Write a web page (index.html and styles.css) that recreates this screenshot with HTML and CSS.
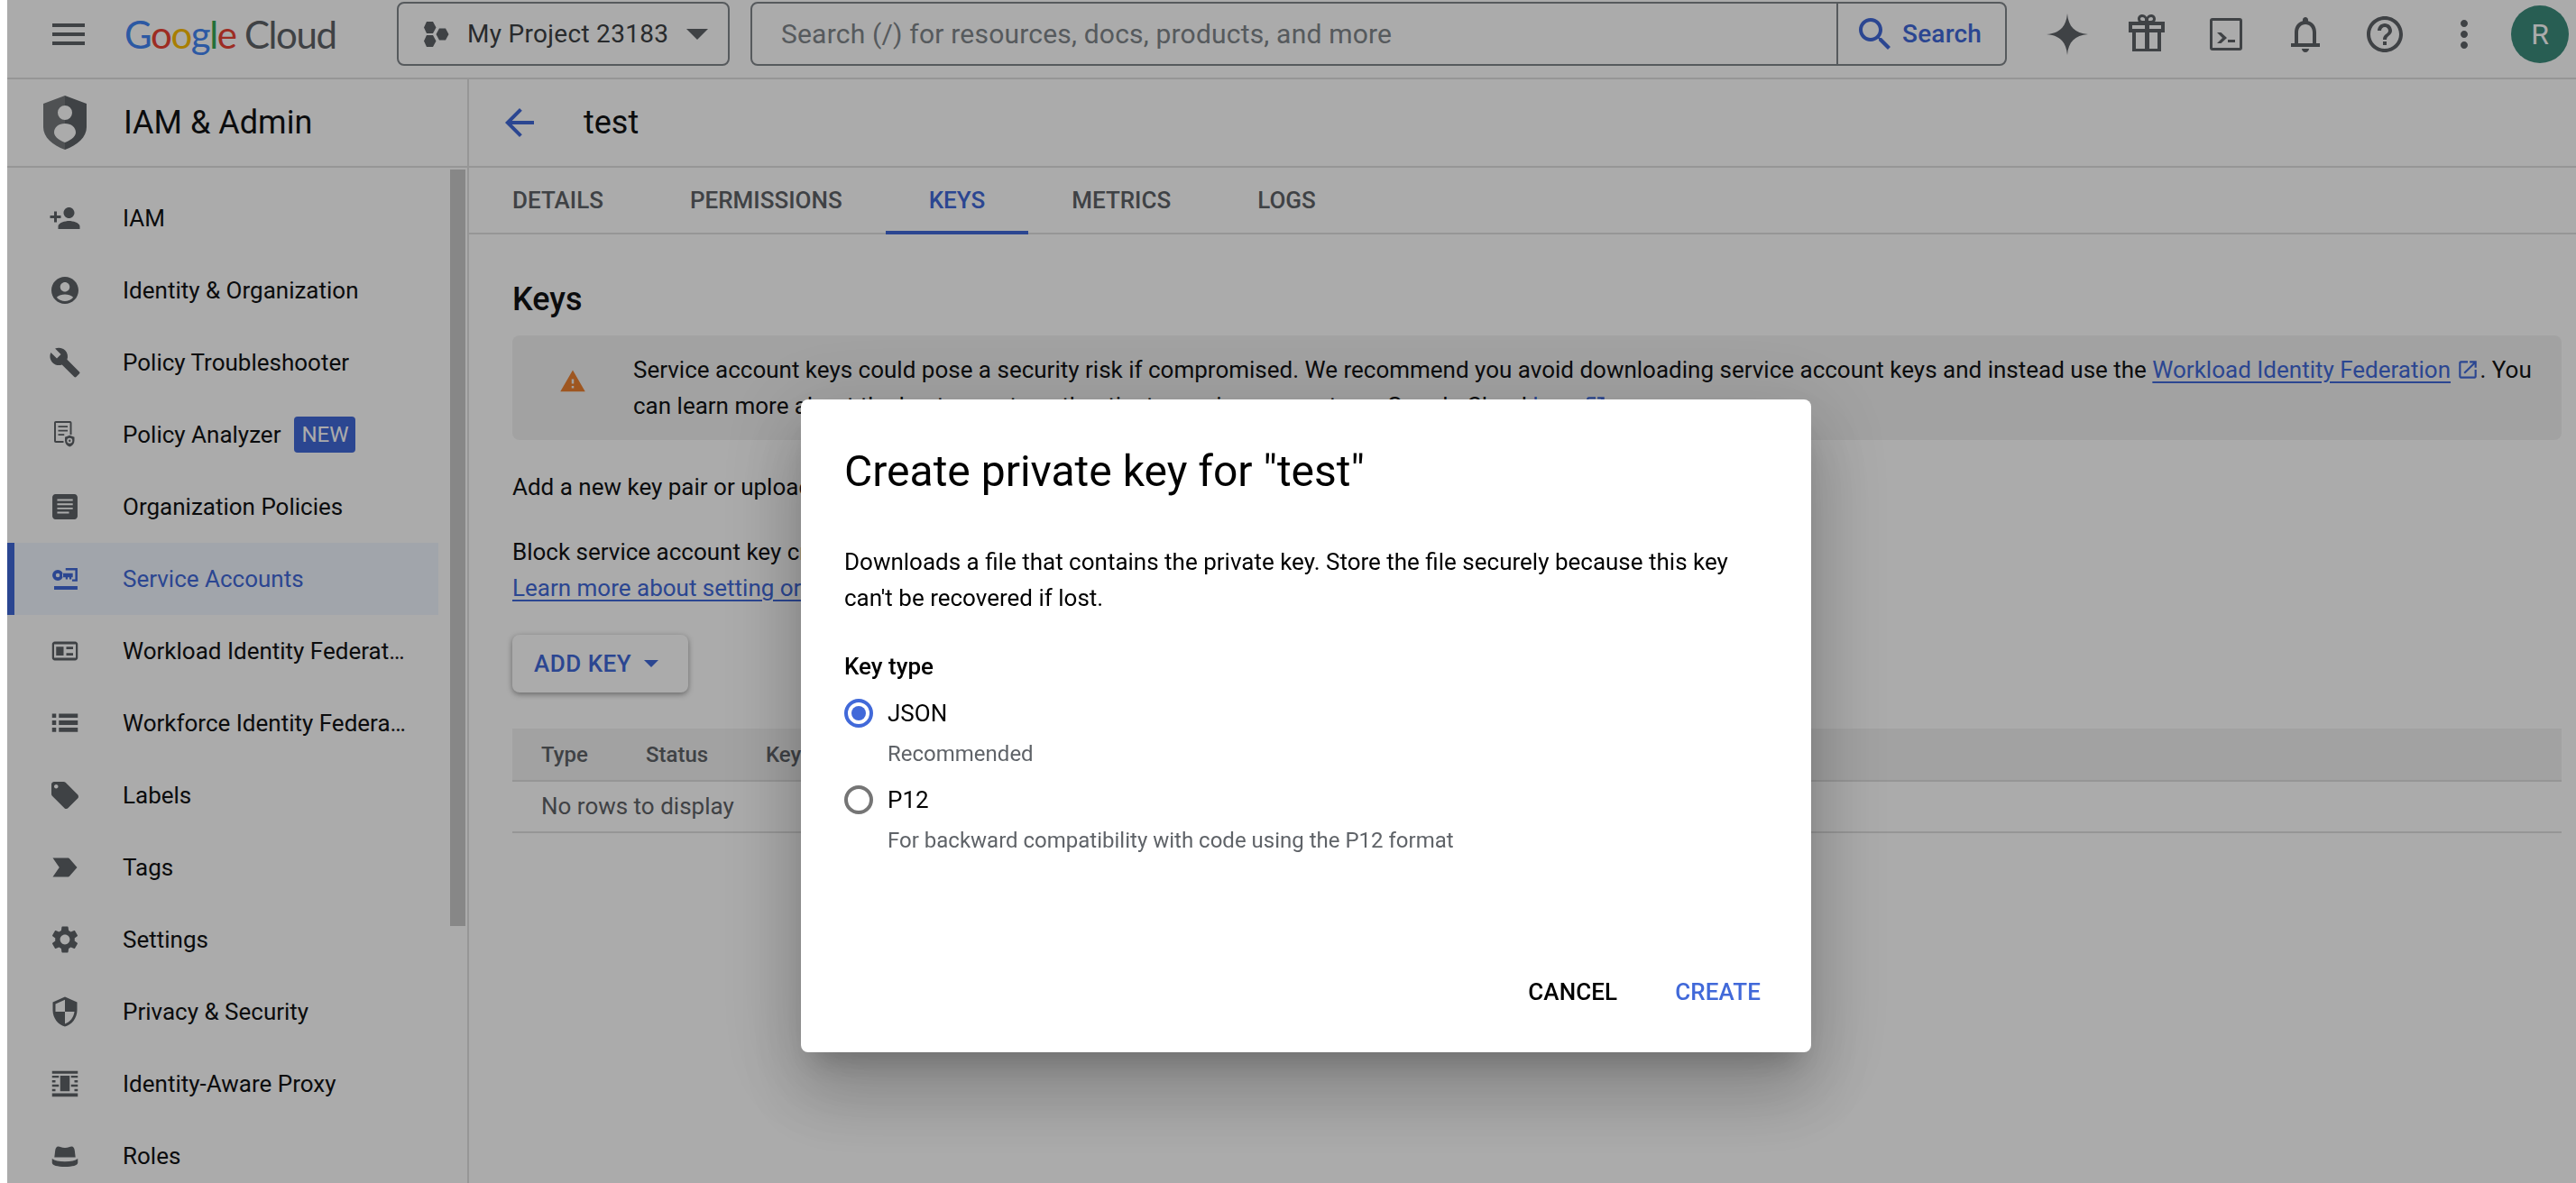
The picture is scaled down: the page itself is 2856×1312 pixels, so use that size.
FILE: index.html
```html
<!DOCTYPE html>
<html lang="en">
<head>
    <meta charset="UTF-8">
    <title>Service account keys - IAM &amp; Admin</title>
    <link rel="stylesheet" href="styles.css">
</head>
<body>
    <div class="app">
        <header class="topbar">
            <svg class="icon-lg menu-btn" viewBox="0 0 24 24"><path d="M3 18h18v-2H3v2zm0-5h18v-2H3v2zm0-7v2h18V6H3z"/></svg>
            <div class="logo">
                <span class="logo-google"><span class="g-blue">G</span><span class="g-red">o</span><span class="g-yellow">o</span><span class="g-blue">g</span><span class="g-green">l</span><span class="g-red">e</span></span>
                <span class="logo-cloud">Cloud</span>
            </div>
            <div class="project-picker">
                <svg class="project-icon" viewBox="0 0 28 30"><path d="M3 1h7l3.500 6.500L10 14H3L0 7.500zM17 8.500h7l3.500 6.500-3.500 6.500h-7L13.500 15zM3 16h7l3.500 6.500L10 29H3L0 22.500z"/></svg>
                <span>My Project 23183</span>
                <svg class="caret" viewBox="0 0 24 14"><path d="M0 1h24L12 13z"/></svg>
            </div>
            <div class="search-box">
                <div class="search-input">Search (/) for resources, docs, products, and more</div>
                <div class="search-btn">
                    <svg class="icon-lg" viewBox="0 0 24 24"><path d="M15.500 14h-.79l-.28-.27C15.410 12.590 16 11.110 16 9.500 16 5.910 13.090 3 9.500 3S3 5.910 3 9.500 5.910 16 9.500 16c1.610 0 3.090-.59 4.230-1.570l.27.28v.79l5 4.990L20.490 19l-4.990-5zm-6 0C7.010 14 5 11.990 5 9.500S7.010 5 9.500 5 14 7.010 14 9.500 11.990 14 9.500 14z"/></svg>
                    <span>Search</span>
                </div>
            </div>
            <div class="top-icons">
                <svg class="icon-lg" viewBox="0 0 24 24"><path d="M12 .5c.6 7.300 4.200 10.900 11.500 11.500-7.300.6-10.900 4.200-11.500 11.500-.6-7.300-4.200-10.900-11.500-11.500C7.800 11.400 11.400 7.800 12 .5z"/></svg>
                <svg class="icon-lg" viewBox="0 0 48 48"><path fill-rule="evenodd" d="M4 10h40v12h-4v21H8V22H4zM8 14v4h14v-4zm19 0v4h13v-4zM12 22v18h10V22zm15 0v18h9V22z"/><path fill-rule="evenodd" d="M19 2c2 0 4 1 5 3 1-2 3-3 5-3 3 0 5 2.200 5 5 0 1.100-.3 2.100-.9 3H14.900c-.6-.9-.9-1.900-.9-3 0-2.800 2-5 5-5zm0 3c-1.100 0-2 .9-2 2s.9 2 2 2h3V7c0-1.100-1.900-2-3-2zm10 0c-1.100 0-3 .9-3 2v2h3c1.100 0 2-.9 2-2s-.9-2-2-2z"/></svg>
                <svg class="icon-lg" viewBox="0 0 48 48"><path fill-rule="evenodd" d="M9 6h30a3 3 0 0 1 3 3v30a3 3 0 0 1-3 3H9a3 3 0 0 1-3-3V9a3 3 0 0 1 3-3zm0 3v30h30V9zm5 13h4.500l6.500 6-6.500 6H14l6-6zm12 8h8v3h-8z"/></svg>
                <svg class="icon-lg" viewBox="0 0 24 24"><path d="M12 22c1.100 0 2-.9 2-2h-4c0 1.100.9 2 2 2zm6-6v-5c0-3.070-1.630-5.640-4.500-6.320V4c0-.83-.67-1.500-1.500-1.500s-1.500.67-1.500 1.500v.68C7.640 5.360 6 7.920 6 11v6H4v2h16v-2h-2zm-2 1H8v-6c0-2.480 1.510-4.500 4-4.500s4 2.020 4 4.500v6z"/></svg>
                <svg class="icon-lg" viewBox="0 0 24 24"><path d="M11 18h2v-2h-2v2zm1-16C6.480 2 2 6.480 2 12s4.480 10 10 10 10-4.480 10-10S17.520 2 12 2zm0 18c-4.410 0-8-3.590-8-8s3.590-8 8-8 8 3.590 8 8-3.590 8-8 8zm0-14c-2.210 0-4 1.790-4 4h2c0-1.100.9-2 2-2s2 .9 2 2c0 2-3 1.750-3 5h2c0-2.250 3-2.500 3-5 0-2.210-1.790-4-4-4z"/></svg>
                <svg class="icon-lg" viewBox="0 0 24 24"><path d="M12 8c1.100 0 2-.9 2-2s-.9-2-2-2-2 .9-2 2 .9 2 2 2zm0 2c-1.100 0-2 .9-2 2s.9 2 2 2 2-.9 2-2-.9-2-2-2zm0 6c-1.100 0-2 .9-2 2s.9 2 2 2 2-.9 2-2-.9-2-2-2z"/></svg>
            </div>
            <div class="avatar">R</div>
        </header>

        <div class="layout">
            <aside class="sidebar">
                <div class="sidebar-head">
                    <svg class="shield" viewBox="0 0 48 60">
                        <defs>
                            <linearGradient id="shieldFill">
                                <stop offset="50%" stop-color="#767a7d"/>
                                <stop offset="50%" stop-color="#5f6368"/>
                            </linearGradient>
                        </defs>
                        <path fill="url(#shieldFill)" fill-rule="evenodd" d="M24 0l24 9v26c0 11-10 20-24 25C10 55 0 46 0 35V9zm0 11a8 8 0 1 0 0 16 8 8 0 0 0 0-16zm0 20c-7 0-12 4-12 10 0 5 7 9 12 11 5-2 12-6 12-11 0-6-5-10-12-10z"/>
                    </svg>
                    <span>IAM &amp; Admin</span>
                </div>
                <div class="nav-wrap">
                    <nav class="nav">
                        <a class="nav-item">
                            <svg viewBox="0 0 24 24"><path d="M15 12c2.210 0 4-1.790 4-4s-1.790-4-4-4-4 1.790-4 4 1.790 4 4 4zm-9-2V7H4v3H1v2h3v3h2v-3h3v-2H6zm9 4c-2.670 0-8 1.340-8 4v2h16v-2c0-2.660-5.330-4-8-4z"/></svg>
                            <span class="nav-label">IAM</span>
                        </a>
                        <a class="nav-item">
                            <svg viewBox="0 0 24 24"><path d="M12 2C6.480 2 2 6.480 2 12s4.480 10 10 10 10-4.480 10-10S17.520 2 12 2zm0 4c1.930 0 3.500 1.570 3.500 3.500S13.930 13 12 13s-3.500-1.570-3.500-3.500S10.070 6 12 6zm0 14c-2.030 0-4.430-.82-6.140-2.880C7.550 15.800 9.680 15 12 15s4.450.8 6.140 2.120C16.430 19.180 14.030 20 12 20z"/></svg>
                            <span class="nav-label">Identity &amp; Organization</span>
                        </a>
                        <a class="nav-item">
                            <svg viewBox="0 0 24 24"><path d="M22.700 19l-9.100-9.100c.9-2.300.4-5-1.500-6.900-2-2-5-2.400-7.400-1.300L9 6 6 9 1.600 4.700C.4 7.100.9 10.100 2.900 12.100c1.900 1.900 4.600 2.400 6.900 1.500l9.100 9.100c.4.4 1 .4 1.400 0l2.300-2.300c.5-.4.5-1.100.1-1.400z"/></svg>
                            <span class="nav-label">Policy Troubleshooter</span>
                        </a>
                        <a class="nav-item">
                            <svg viewBox="0 0 24 24"><path fill-rule="evenodd" d="M5.300 2h10.400c.8 0 1.300.5 1.300 1.300V12h-1.300V3.300H5.300v13.400H11V18H5.300c-.8 0-1.300-.5-1.300-1.300V3.300C4 2.500 4.500 2 5.300 2zM7 5.500h7v1.200H7zm0 3h7v1.200H7zm0 3h4.500v1.200H7zM15.500 12.500l3.500 1.300v2.700c0 2.200-1.500 3.700-3.500 4.500-2-.8-3.500-2.300-3.500-4.500v-2.700zm0 2a2 2 0 1 0 0 4 2 2 0 0 0 0-4zm0 1.200a.8.8 0 1 1 0 1.600.8.8 0 0 1 0-1.600z"/></svg>
                            <span class="nav-label">Policy Analyzer</span>
                            <span class="badge">NEW</span>
                        </a>
                        <a class="nav-item">
                            <svg viewBox="0 0 24 24"><path fill-rule="evenodd" d="M5 2.700h14c1.200 0 2.300 1.100 2.300 2.300v14c0 1.200-1.100 2.300-2.300 2.300H5c-1.200 0-2.300-1.100-2.300-2.300V5c0-1.200 1.100-2.300 2.300-2.300zM6.300 6.400v1.300h11.500V6.400zm0 3.100v1.300h11.500V9.500zm0 3.100v1.300h11.500v-1.300zm0 3.100v1.300H15v-1.300z"/></svg>
                            <span class="nav-label">Organization Policies</span>
                        </a>
                        <a class="nav-item active">
                            <svg viewBox="0 0 24 24"><path fill-rule="evenodd" d="M6.700 5.300a4 4 0 1 1 0 8 4 4 0 0 1 0-8zm0 2.500a1.500 1.500 0 1 0 0 3 1.500 1.500 0 0 0 0-3zM10 7.800h7.800v3h-1v1.500h-1.500v-1.500H14v1.500h-1.500v-1.500H10zM12.500 4h8.800v9.800h-4v-1.500h2.300V5.700h-7.100zM4 17.300h17.300V20H4z"/></svg>
                            <span class="nav-label">Service Accounts</span>
                        </a>
                        <a class="nav-item">
                            <svg viewBox="0 0 24 24"><path fill-rule="evenodd" d="M4.500 5h15c1.100 0 2 .9 2 2v10c0 1.100-.9 2-2 2h-15c-1.100 0-2-.9-2-2V7c0-1.100.9-2 2-2zm-.5 2v10h16V7zm1.500 1.800h5.500v6.500H5.500zm7.500 0h5v1.800h-5zm0 4.700h5v1.800h-5z"/></svg>
                            <span class="nav-label">Workload Identity Federat…</span>
                        </a>
                        <a class="nav-item">
                            <svg viewBox="0 0 24 24"><path d="M2.500 5h3v3h-3zm5 0h14v3h-14zm-5 5h3v3.300h-3zm5 0h14v3.300h-14zm-5 5.300h3v3.200h-3zm5 0h14v3.200h-14z"/></svg>
                            <span class="nav-label">Workforce Identity Federa…</span>
                        </a>
                        <a class="nav-item">
                            <svg viewBox="0 0 24 24"><path d="M21.410 11.580l-9-9C12.050 2.220 11.550 2 11 2H4c-1.100 0-2 .9-2 2v7c0 .55.22 1.050.59 1.420l9 9c.36.36.86.58 1.410.58.55 0 1.050-.22 1.410-.59l7-7c.37-.36.59-.86.59-1.410 0-.55-.23-1.060-.59-1.420zM5.500 7C4.670 7 4 6.330 4 5.500S4.670 4 5.500 4 7 4.670 7 5.500 6.330 7 5.500 7z"/></svg>
                            <span class="nav-label">Labels</span>
                        </a>
                        <a class="nav-item">
                            <svg viewBox="0 0 24 24"><path d="M3 19l11 .01c.67 0 1.270-.33 1.630-.84L21 12l-5.370-6.160c-.36-.51-.96-.84-1.630-.84L3 5.010 7.840 12 3 19z"/></svg>
                            <span class="nav-label">Tags</span>
                        </a>
                        <a class="nav-item">
                            <svg viewBox="0 0 24 24"><path d="M19.140 12.940c.04-.3.06-.61.06-.94 0-.32-.02-.64-.07-.94l2.030-1.580c.18-.14.23-.41.12-.61l-1.920-3.320c-.12-.22-.37-.29-.59-.22l-2.390.96c-.5-.38-1.030-.7-1.620-.94l-.36-2.540c-.04-.24-.24-.41-.48-.41h-3.840c-.24 0-.43.17-.47.41l-.36 2.540c-.59.24-1.130.57-1.620.94l-2.390-.96c-.22-.08-.47 0-.59.22L2.740 8.870c-.12.21-.08.47.12.61l2.030 1.580c-.05.3-.09.63-.09.94s.02.64.07.94l-2.030 1.580c-.18.14-.23.41-.12.61l1.920 3.320c.12.22.37.29.59.22l2.390-.96c.5.38 1.030.7 1.620.94l.36 2.540c.05.24.24.41.48.41h3.840c.24 0 .44-.17.47-.41l.36-2.540c.59-.24 1.130-.56 1.620-.94l2.390.96c.22.08.47 0 .59-.22l1.920-3.320c.12-.22.07-.47-.12-.61l-2.010-1.580zM12 15.600c-1.980 0-3.600-1.620-3.600-3.600s1.620-3.600 3.600-3.600 3.600 1.620 3.600 3.600-1.620 3.600-3.600 3.600z"/></svg>
                            <span class="nav-label">Settings</span>
                        </a>
                        <a class="nav-item">
                            <svg viewBox="0 0 24 24"><path d="M12 1L3 5v6c0 5.550 3.840 10.740 9 12 5.160-1.260 9-6.450 9-12V5l-9-4zm0 10.990h7c-.53 4.120-3.280 7.790-7 8.940V12H5V6.300l7-3.110v8.800z"/></svg>
                            <span class="nav-label">Privacy &amp; Security</span>
                        </a>
                        <a class="nav-item">
                            <svg viewBox="0 0 24 24"><path d="M2.500 2.500h19v2h-19zm0 3.500h5v1.500h-5zm14 0h5v1.500h-5zm-8 0h7v11.500h-7zm-6 3.300h2.500v1.700H2.500zm16.500 0h2.500v1.700H19zM2.500 12.500h5v1.700h-5zm14 0h5v1.700h-5zm-14 3.300h2.500v1.700H2.500zm16.500 0h2.500v1.700H19zM2.500 19h19v2.500h-19z"/></svg>
                            <span class="nav-label">Identity-Aware Proxy</span>
                        </a>
                        <a class="nav-item">
                            <svg viewBox="0 0 24 24"><path d="M7 5c1.500 0 2.500 1 5 1s3.500-1 5-1c1.200 0 1.900 1 2.200 3l.6 5H4.200l.6-5C5.100 6 5.800 5 7 5zM2.500 14c2 1.500 5 2.200 9.500 2.200s7.500-.7 9.500-2.200v3c0 2-4 3-9.500 3s-9.500-1-9.500-3z"/></svg>
                            <span class="nav-label">Roles</span>
                        </a>
                    </nav>
                    <div class="scroll-thumb"></div>
                </div>
            </aside>

            <main class="main">
                <div class="page-head">
                    <svg class="icon-lg back-btn" viewBox="0 0 24 24"><path d="M20 11H7.830l5.590-5.590L12 4l-8 8 8 8 1.410-1.410L7.830 13H20v-2z"/></svg>
                    <span>test</span>
                </div>
                <div class="tabs">
                    <div class="tab">Details</div>
                    <div class="tab">Permissions</div>
                    <div class="tab tab-active">Keys</div>
                    <div class="tab">Metrics</div>
                    <div class="tab">Logs</div>
                </div>
                <section class="content">
                    <h2>Keys</h2>
                    <div class="notice">
                        <svg class="notice-icon" viewBox="0 0 24 24"><path d="M1 21h22L12 2 1 21zm12-3h-2v-2h2v2zm0-4h-2v-4h2v4z"/></svg>
                        <p>Service account keys could pose a security risk if compromised. We recommend you avoid downloading service account keys and instead use the <a class="link">Workload Identity Federation</a> <svg class="ext-icon" viewBox="0 0 24 24"><path d="M19 19H5V5h7V3H5c-1.110 0-2 .9-2 2v14c0 1.100.89 2 2 2h14c1.100 0 2-.9 2-2v-7h-2v7zM14 3v2h3.590l-9.830 9.830 1.410 1.410L19 6.410V10h2V3h-7z"/></svg>. You can learn more about the best ways to authenticate service accounts on Google Cloud <a class="link">here</a> <svg class="ext-icon" viewBox="0 0 24 24"><path d="M19 19H5V5h7V3H5c-1.110 0-2 .9-2 2v14c0 1.100.89 2 2 2h14c1.100 0 2-.9 2-2v-7h-2v7zM14 3v2h3.590l-9.830 9.830 1.410 1.410L19 6.410V10h2V3h-7z"/></svg>.</p>
                    </div>
                    <p class="para">Add a new key pair or upload a public key certificate from an existing key pair.</p>
                    <p class="para">Block service account key creation using organization policies.<br><a class="link">Learn more about setting organization policies for service accounts</a></p>
                    <div class="add-key">
                        <span>Add key</span>
                        <svg viewBox="0 0 16 8"><path d="M0 0h16L8 8z"/></svg>
                    </div>
                    <div class="table-head">
                        <span class="col-type">Type</span>
                        <span class="col-status">Status</span>
                        <span>Key</span>
                    </div>
                    <div class="table-row">No rows to display</div>
                </section>
            </main>
        </div>
    </div>

    <div class="scrim"></div>

    <div class="dialog">
        <h1>Create private key for "test"</h1>
        <p class="dialog-desc">Downloads a file that contains the private key. Store the file securely because this key can't be recovered if lost.</p>
        <div class="field-label">Key type</div>
        <div class="radio-row">
            <span class="radio radio-on"></span>
            <span>JSON</span>
        </div>
        <div class="radio-hint">Recommended</div>
        <div class="radio-row radio-row-next">
            <span class="radio"></span>
            <span>P12</span>
        </div>
        <div class="radio-hint">For backward compatibility with code using the P12 format</div>
        <div class="dialog-actions">
            <button class="btn">Cancel</button>
            <button class="btn btn-primary">Create</button>
        </div>
    </div>
</body>
</html>
```

FILE: styles.css
```css
:root {
    --blue: #4169d9;
    --icon: #5f6368;
    --text: #111214;
    --line: #e0e0e0;
}

* {
    box-sizing: border-box;
}

html, body {
    height: 100%;
}

body {
    margin: 0;
    padding-left: 8px;
    height: 1312px;
    overflow: hidden;
    background: white;
    color: var(--text);
    font-family: Roboto, "Liberation Sans", sans-serif;
    font-size: 26px;
    line-height: 40px;
}

svg {
    fill: currentColor;
    flex-shrink: 0;
}

p, h1, h2 {
    margin: 0;
}

.icon-lg {
    width: 48px;
    height: 48px;
    color: var(--icon);
}

/* top bar */
.app {
    height: 1312px;
    display: flex;
    flex-direction: column;
}

.topbar {
    height: 88px;
    flex-shrink: 0;
    display: flex;
    align-items: center;
    padding-bottom: 11px;
    border-bottom: 2px solid var(--line);
}

.menu-btn {
    margin-left: 44px;
}

.logo {
    width: 302px;
    margin-left: 38px;
    font-family: Lato, Roboto, sans-serif;
    font-size: 42px;
    letter-spacing: -1.4px;
    white-space: nowrap;
}

.logo-cloud {
    color: var(--icon);
}

.g-blue { color: #4285f4; }
.g-red { color: #ea4335; }
.g-yellow { color: #fbbc04; }
.g-green { color: #34a853; }

.project-picker {
    width: 369px;
    height: 71px;
    display: flex;
    align-items: center;
    padding-left: 28px;
    border: 2px solid #80868b;
    border-radius: 8px;
    color: #3c4043;
    font-size: 28px;
    letter-spacing: .3px;
}

.project-icon {
    width: 28px;
    height: 30px;
    margin-right: 20px;
    color: var(--icon);
}

.caret {
    width: 24px;
    height: 14px;
    margin-left: 20px;
    color: var(--icon);
}

.search-box {
    width: 1393px;
    height: 71px;
    margin-left: 23px;
    display: flex;
    border: 2px solid #80868b;
    border-radius: 8px;
}

.search-input {
    flex: 1;
    padding-left: 32px;
    line-height: 68px;
    font-size: 30px;
    letter-spacing: .2px;
    color: #80868b;
    border-right: 2px solid #80868b;
}

.search-btn {
    width: 185px;
    display: flex;
    align-items: center;
    gap: 6px;
    padding-left: 17px;
    color: var(--blue);
    font-size: 28px;
    font-weight: 500;
    letter-spacing: .2px;
}

.search-btn .icon-lg {
    color: var(--blue);
}

.top-icons {
    display: flex;
    gap: 40px;
    margin-left: 43px;
}

.avatar {
    width: 64px;
    height: 64px;
    margin-left: 28px;
    border-radius: 50%;
    background: #3d8c7d;
    color: white;
    font-size: 32px;
    line-height: 64px;
    text-align: center;
}

/* sidebar */
.layout {
    flex: 1;
    display: flex;
    min-height: 0;
}

.sidebar {
    width: 512px;
    flex-shrink: 0;
    border-right: 2px solid var(--line);
}

.sidebar-head {
    height: 98px;
    display: flex;
    align-items: center;
    padding-left: 40px;
    border-bottom: 2px solid var(--line);
    font-size: 36px;
}

.shield {
    width: 48px;
    height: 60px;
    margin-right: 41px;
}

.nav-wrap {
    display: flex;
}

.nav {
    width: 478px;
    padding-top: 16px;
}

.nav-item {
    height: 80px;
    display: flex;
    align-items: center;
    padding: 0 20px 0 46px;
}

.nav-item svg {
    width: 36px;
    height: 36px;
    margin-right: 46px;
    color: var(--icon);
}

.nav-label {
    white-space: nowrap;
}

.badge {
    margin-left: 15px;
    width: 68px;
    height: 40px;
    border-radius: 4px;
    background: var(--blue);
    color: white;
    font-size: 24px;
    text-align: center;
}

.nav-item.active {
    padding-left: 38px;
    border-left: 8px solid var(--blue);
    background: #f1f6ff;
    color: var(--blue);
}

.nav-item.active svg {
    color: var(--blue);
}

.scroll-thumb {
    width: 17px;
    height: 839px;
    margin: 2px 0 0 13px;
    background: #cacaca;
}

/* main */
.main {
    flex: 1;
    min-width: 0;
}

.page-head {
    height: 98px;
    display: flex;
    align-items: center;
    padding-left: 32px;
    border-bottom: 2px solid var(--line);
    font-size: 36px;
}

.back-btn {
    margin-right: 47px;
    color: var(--blue);
}

.tabs {
    height: 74px;
    display: flex;
    border-bottom: 2px solid var(--line);
}

.tab {
    padding: 0 48px;
    height: 74px;
    line-height: 72px;
    font-size: 26px;
    font-weight: 500;
    text-transform: uppercase;
    color: var(--icon);
}

.tab-active {
    color: var(--blue);
    border-bottom: 4px solid var(--blue);
}

.content {
    padding: 48px 16px 0 48px;
}

h2 {
    font-size: 36px;
    font-weight: 500;
    line-height: 48px;
}

.notice {
    display: flex;
    margin-top: 16px;
    padding: 18px 24px 18px 52px;
    height: 116px;
    border-radius: 8px;
    background: #f2f2f2;
}

.notice-icon {
    width: 30px;
    height: 30px;
    margin: 18px 52px 0 0;
    color: #ec8130;
}

.link {
    color: var(--blue);
    text-decoration: underline;
    text-underline-offset: 4px;
}

.ext-icon {
    width: 26px;
    height: 26px;
    vertical-align: -4px;
    color: var(--blue);
}

.para {
    margin-top: 32px;
}

.add-key {
    width: 195px;
    height: 64px;
    margin-top: 32px;
    display: flex;
    align-items: center;
    gap: 14px;
    padding-left: 24px;
    border-radius: 8px;
    box-shadow: 0 2px 6px rgba(0,0,0,0.4);
    color: var(--blue);
    font-weight: 500;
    letter-spacing: .5px;
    text-transform: uppercase;
}

.add-key svg {
    width: 16px;
    height: 8px;
}

.table-head {
    height: 59px;
    margin-top: 40px;
    display: flex;
    align-items: center;
    padding-left: 32px;
    background: #f2f2f2;
    border-bottom: 2px solid var(--line);
    font-size: 24px;
    font-weight: 500;
    color: var(--icon);
}

.col-type {
    width: 116px;
}

.col-status {
    width: 133px;
}

.table-row {
    height: 57px;
    padding-left: 32px;
    line-height: 55px;
    border-bottom: 2px solid var(--line);
    color: var(--icon);
}

/* modal */
.scrim {
    position: fixed;
    top: 0;
    right: 0;
    bottom: 0;
    left: 8px;
    background: rgba(0,0,0,0.33);
}

.dialog {
    position: fixed;
    top: 443px;
    left: 888px;
    width: 1120px;
    height: 724px;
    display: flex;
    flex-direction: column;
    padding: 50px 40px 31px 48px;
    border-radius: 8px;
    background: white;
    color: black;
    box-shadow: 0 48px 76px 6px rgba(0,0,0,0.14), 0 18px 92px 16px rgba(0,0,0,0.12), 0 22px 30px -14px rgba(0,0,0,0.2);
}

.dialog h1 {
    font-size: 48px;
    font-weight: 400;
    line-height: 60px;
}

.dialog-desc {
    margin-top: 50px;
}

.field-label {
    margin-top: 36px;
    font-weight: 500;
}

.radio-row {
    display: flex;
    align-items: center;
    gap: 16px;
    margin-top: 12px;
}

.radio-row-next {
    margin-top: 15px;
}

.radio {
    width: 32px;
    height: 32px;
    display: flex;
    align-items: center;
    justify-content: center;
    border: 4px solid #757575;
    border-radius: 50%;
}

.radio-on {
    border-color: var(--blue);
}

.radio-on::after {
    content: "";
    width: 16px;
    height: 16px;
    border-radius: 50%;
    background: var(--blue);
}

.radio-hint {
    margin: 9px 0 0 48px;
    font-size: 24px;
    line-height: 32px;
    color: #5f6368;
}

.dialog-actions {
    margin-top: auto;
    display: flex;
    justify-content: flex-end;
    gap: 32px;
}

.btn {
    height: 72px;
    padding: 0 16px;
    border: none;
    background: none;
    color: black;
    font: 500 26px Roboto, "Liberation Sans", sans-serif;
    letter-spacing: .1px;
    text-transform: uppercase;
}

.btn-primary {
    color: var(--blue);
}
```
